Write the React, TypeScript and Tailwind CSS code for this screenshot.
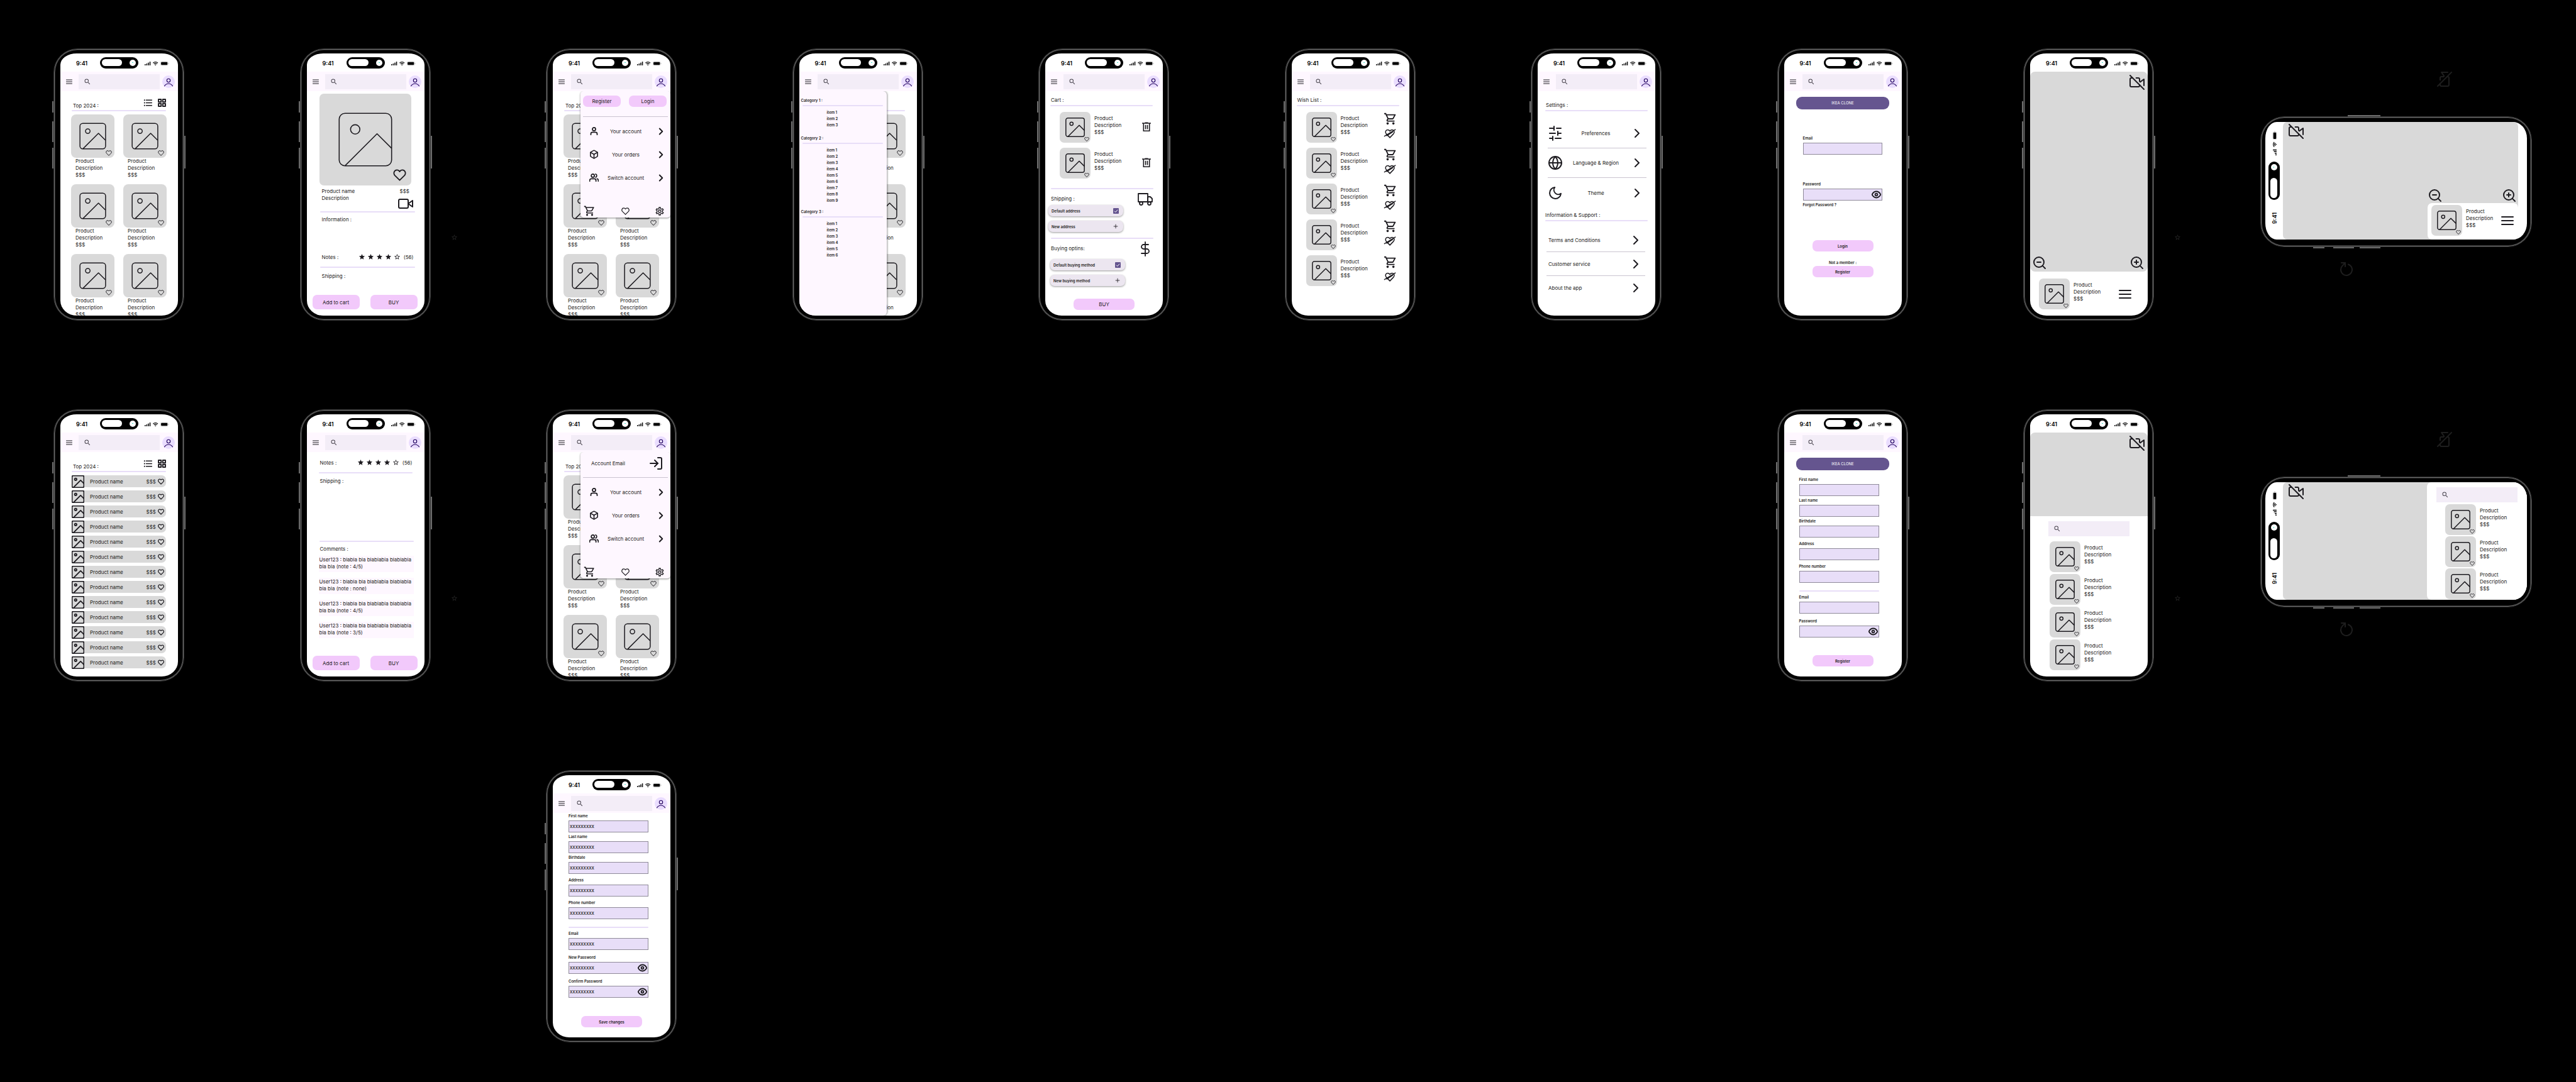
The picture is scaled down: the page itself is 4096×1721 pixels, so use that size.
import { useId, type ReactNode } from "react";
import {
  FiBox,
  FiChevronRight,
  FiDollarSign,
  FiEye,
  FiGlobe,
  FiLogIn,
  FiMenu,
  FiMoon,
  FiPlus,
  FiRotateCw,
  FiSliders,
  FiTruck,
  FiUser,
  FiUsers,
  FiVideo,
  FiVideoOff,
  FiZoomIn,
  FiZoomOut,
} from "react-icons/fi";
import {
  MdFormatListBulleted,
  MdOutlineSettings,
  MdOutlineShoppingCart,
  MdSearch,
  MdStar,
  MdStarBorder,
} from "react-icons/md";

/* ---------- drawings ---------- */

function ImageGlyph({ className, stroke = 1.5 }: { className: string; stroke?: number }) {
  return (
    <svg viewBox="2.5 2.5 19 19" className={className} fill="none" stroke="#1d1b20" strokeWidth={stroke} aria-hidden="true">
      <rect x="3" y="3" width="18" height="18" rx="2" vectorEffect="non-scaling-stroke" />
      <circle cx="8.5" cy="8.5" r="1.6" vectorEffect="non-scaling-stroke" />
      <path d="M21 15 16 10 5 21" strokeLinejoin="round" vectorEffect="non-scaling-stroke" />
    </svg>
  );
}

function Heart({ className, stroke = 1 }: { className: string; stroke?: number }) {
  return (
    <svg viewBox="0 0 24 22" className={className} fill="none" stroke="#1d1b20" strokeWidth={stroke} strokeLinejoin="round" aria-hidden="true">
      <path
        d="M12 20.5 3.2 11.8C-.2 8.2 1.6 1.6 7 1.6c2.4 0 4 1.200 5 3 1-1.800 2.600-3 5-3 5.400 0 7.200 6.600 3.800 10.200Z"
        vectorEffect="non-scaling-stroke"
      />
    </svg>
  );
}

function HeartOff() {
  return (
    <svg viewBox="0 0 26 20" className="h-[15px] w-[20px]" fill="none" stroke="#1d1b20" strokeWidth="2" strokeLinejoin="round" strokeLinecap="round" aria-hidden="true">
      <path d="M13 18.500 5.300 10.500C2.300 7 4 2 8.300 2c2.200 0 3.700 1.200 4.700 2.800C14 3.200 15.500 2 17.700 2 22 2 23.700 7 20.700 10.500Z" />
      <path d="M1.500 15.500 24.500 1.500M6.500 14.500 19 6.500" />
    </svg>
  );
}

function Trash() {
  return (
    <svg viewBox="0 0 14 15" className="h-[15px] w-[14px]" fill="none" stroke="#1d1b20" strokeWidth="1.600" aria-hidden="true">
      <path d="M0 2h14M4.500 1.200h5M2.300 2v12.200h9.400V2M5.500 4.800v6.800M8.500 4.800v6.800" />
    </svg>
  );
}

function GridGlyph() {
  return (
    <svg viewBox="0 0 13 13" className="size-[13px]" fill="none" stroke="#1d1b20" strokeWidth="1.900" strokeLinejoin="round" aria-hidden="true">
      <rect x="1" y="1" width="4.200" height="4.200" />
      <rect x="7.800" y="1" width="4.200" height="4.200" />
      <rect x="1" y="7.800" width="4.200" height="4.200" />
      <rect x="7.800" y="7.800" width="4.200" height="4.200" />
    </svg>
  );
}

function Signals() {
  return (
    <svg viewBox="0 0 39 8" className="h-[8px] w-[39px]" aria-hidden="true">
      <rect x="0" y="5" width="1.500" height="2" rx=".5" />
      <rect x="2.600" y="4" width="1.500" height="3" rx=".5" />
      <rect x="5.200" y="2.500" width="1.500" height="4.500" rx=".5" />
      <rect x="7.800" y="1" width="1.500" height="6" rx=".5" />
      <path d="M13.400 3.200a5.500 5.500 0 0 1 7.600 0M14.900 4.900a3.400 3.400 0 0 1 4.600 0" fill="none" stroke="#000" strokeWidth="1.200" />
      <path d="m17.200 7.200-1.200-1.300a2 2 0 0 1 2.400 0Z" />
      <rect x="25.300" y="1" width="11.800" height="6" rx="1.800" fill="none" stroke="#bbb" strokeWidth=".6" />
      <rect x="26.100" y="1.700" width="10.200" height="4.600" rx="1.200" />
      <rect x="37.600" y="3" width=".8" height="2" fill="#bbb" />
    </svg>
  );
}

/* ---------- shared parts ---------- */

function StatusBar() {
  return (
    <div className="flex h-[29px] w-[187px] shrink-0 items-center pl-[25px] text-black">
      <span className="mt-[2px] w-[38px] text-[9px] leading-[10px] font-semibold">9:41</span>
      <span className="flex h-[18px] w-[61px] items-center justify-between rounded-full bg-black pr-[4px] pl-[3px]">
        <span className="h-[11px] w-[32px] rounded-full bg-white" />
        <span className="flex size-[10px] items-center justify-center rounded-full bg-white">
          <span className="h-px w-[2px] bg-[#3fe8d0]" />
        </span>
      </span>
      <span className="mt-[2px] ml-[10px]">
        <Signals />
      </span>
    </div>
  );
}

function SearchBox() {
  return (
    <label className="flex h-[24px] w-[129px] shrink-0 items-center bg-[#f3edf7] pl-[8px]">
      <MdSearch className="size-[12px] shrink-0 text-[#49454f]" aria-hidden="true" />
      <input type="search" aria-label="Search" className="min-w-0 flex-1 bg-transparent px-[4px] text-[8px] outline-none" />
    </label>
  );
}

function AppHeader() {
  return (
    <header className="flex h-[31px] shrink-0 items-center bg-[#fef7ff] pl-[8px]">
      <button type="button" aria-label="Open categories" className="mr-[9px]">
        <FiMenu className="size-[12px]" />
      </button>
      <SearchBox />
      <button type="button" aria-label="Account" className="ml-[4px] size-[20px] rounded-full bg-[#eaddff]">
        <svg viewBox="0 0 20 20" className="size-[20px]" fill="none" stroke="#21005d" strokeWidth="1.100" aria-hidden="true">
          <circle cx="10" cy="8" r="2.700" />
          <path d="M3.200 17.300C5 14.300 7.400 13 10 13s5 1.300 6.800 4.300" />
        </svg>
      </button>
    </header>
  );
}

function Phone({ place = "", header = true, star = false, children }: { place?: string; header?: boolean; star?: boolean; children: ReactNode }) {
  return (
    <article className={`relative h-[433px] w-[208px] ${place}`}>
      <i className="absolute top-[84px] -left-[2px] h-[18px] w-[2px] bg-[#6d6d6d]" />
      <i className="absolute top-[116px] -left-[2px] h-[33px] w-[2px] bg-[#6d6d6d]" />
      <i className="absolute top-[158px] -left-[2px] h-[33px] w-[2px] bg-[#6d6d6d]" />
      <i className="absolute top-[139px] -right-[2px] h-[52px] w-[2px] bg-[#6d6d6d]" />
      {star && <MdStarBorder className="absolute top-[295px] left-[240px] size-[11px] text-[#242424]" aria-hidden="true" />}
      <div className="h-full rounded-[38px] border border-[#2e2e2e] bg-black py-[7px] pr-[9px] pl-[10px] shadow-[inset_0_0_0_1px_#6a6a6a,inset_0_0_0_2px_#2c2c2c]">
        <div className="flex h-full flex-col overflow-hidden bg-white [border-radius:26px_26px_26px_26px/18px_18px_24px_24px]">
          <StatusBar />
          {header && <AppHeader />}
          <div className="relative flex min-h-0 flex-1 flex-col overflow-hidden">{children}</div>
        </div>
      </div>
    </article>
  );
}

function LandscapePhone({ children }: { children: ReactNode }) {
  return (
    <article className="relative h-[208px] w-[432px]">
      <i className="absolute -top-[2px] left-[139px] h-[2px] w-[52px] bg-[#6d6d6d]" />
      <i className="absolute -bottom-[2px] left-[84px] h-[2px] w-[18px] bg-[#6d6d6d]" />
      <i className="absolute -bottom-[2px] left-[116px] h-[2px] w-[33px] bg-[#6d6d6d]" />
      <i className="absolute -bottom-[2px] left-[158px] h-[2px] w-[33px] bg-[#6d6d6d]" />
      <FiVideoOff className="absolute -top-[71px] left-[281px] size-[24px] -rotate-90 text-[#1e1e1e]" aria-hidden="true" />
      <FiRotateCw className="absolute top-[232px] left-[125px] size-[24px] -rotate-90 text-[#1e1e1e]" aria-hidden="true" />
      <div className="h-full rounded-[38px] border border-[#2e2e2e] bg-black pt-[8px] pr-[7px] pb-[11px] pl-[7px] shadow-[inset_0_0_0_1px_#6a6a6a,inset_0_0_0_2px_#2c2c2c]">
        <div className="flex h-full overflow-hidden bg-white [border-radius:18px_22px_22px_18px/26px]">
          <div className="relative w-[28px] shrink-0">
            <div className="absolute bottom-0 left-full origin-bottom-left -rotate-90">
              <StatusBar />
            </div>
          </div>
          {children}
        </div>
      </div>
    </article>
  );
}

function Divider({ className = "" }: { className?: string }) {
  return <hr className={`h-[2px] shrink-0 rounded-full border-0 bg-[#e8def8] ${className}`} />;
}

function PinkButton({ className, children }: { className: string; children: ReactNode }) {
  return (
    <button type="button" className={`shrink-0 rounded-[7px] bg-[#f2c9fb] text-center ${className}`}>
      {children}
    </button>
  );
}

function Details() {
  return (
    <p className="leading-[11px]">
      Product
      <br />
      Description
      <br />
      $$$
    </p>
  );
}

/* ---------- catalogue ---------- */

function CatalogueHeading({ icons = true }: { icons?: boolean }) {
  return (
    <div className="mr-[19px] ml-[18px] shrink-0 pt-[12px]">
      <div className="flex h-[18px] justify-between">
        <h2 className="mt-[6px] ml-[2px] leading-[11px]">Top 2024 :</h2>
        {icons && (
          <div className="flex h-[13px] items-center gap-[7px]">
            <button type="button" aria-label="List view">
              <MdFormatListBulleted className="size-[17px]" />
            </button>
            <button type="button" aria-label="Grid view">
              <GridGlyph />
            </button>
          </div>
        )}
      </div>
      <Divider />
    </div>
  );
}

function ProductCard() {
  return (
    <div>
      <div className="relative size-[69px] rounded-[8px] bg-[#d9d9d9] p-[13px]">
        <ImageGlyph className="size-[43px]" />
        <button type="button" aria-label="Add to wish list" className="absolute right-[4px] bottom-[3px]">
          <Heart className="h-[9px] w-[10px]" />
        </button>
      </div>
      <div className="pl-[7px]">
        <Details />
      </div>
    </div>
  );
}

function Catalogue({ icons = true }: { icons?: boolean }) {
  return (
    <>
      <CatalogueHeading icons={icons} />
      <div className="mt-[5px] grid grid-cols-[69px_69px] justify-between gap-y-[9px] pr-[18px] pl-[17px]">
        {Array.from({ length: 6 }, (_, i) => (
          <ProductCard key={i} />
        ))}
      </div>
    </>
  );
}

function CatalogueList() {
  return (
    <>
      <CatalogueHeading />
      <ul className="mt-[5px] flex flex-col gap-[5px] pr-[19px] pl-[18px]">
        {Array.from({ length: 13 }, (_, i) => (
          <li key={i} className="flex h-[19px] items-center rounded-[7px] bg-[#d9d9d9] pr-[3px]">
            <ImageGlyph className="size-[20px]" stroke={1.8} />
            <span className="ml-[9px] flex-1">Product name</span>
            <span className="mr-[3px]">$$$</span>
            <button type="button" aria-label="Add to wish list">
              <Heart className="h-[10px] w-[10px]" stroke={1.2} />
            </button>
          </li>
        ))}
      </ul>
    </>
  );
}

/* ---------- product page ---------- */

function NotesRow() {
  return (
    <div className="flex h-[11px] shrink-0 items-center justify-between">
      <span>Notes :</span>
      <span className="flex items-center gap-[3px]">
        <MdStar className="size-[11px]" />
        <MdStar className="size-[11px]" />
        <MdStar className="size-[11px]" />
        <MdStar className="size-[11px]" />
        <MdStarBorder className="size-[11px]" />
        <span className="ml-[2px]">(56)</span>
      </span>
    </div>
  );
}

function BuyBar({ className }: { className: string }) {
  return (
    <div className={`flex shrink-0 justify-between pr-[11px] pl-[9px] ${className}`}>
      <PinkButton className="h-[23px] w-[75px]">Add to cart</PinkButton>
      <PinkButton className="h-[23px] w-[75px]">BUY</PinkButton>
    </div>
  );
}

function ProductPage() {
  return (
    <>
      <div className="relative mt-[4px] ml-[20px] size-[146px] shrink-0 rounded-[7px] bg-[#d9d9d9] p-[29px]">
        <ImageGlyph className="size-[88px]" stroke={1.6} />
        <button type="button" aria-label="Add to wish list" className="absolute right-[8px] bottom-[7px]">
          <Heart className="h-[19px] w-[21px]" stroke={1.8} />
        </button>
      </div>
      <div className="mt-[4px] mr-[18px] ml-[24px] flex h-[37px] shrink-0 justify-between">
        <p className="leading-[11px]">
          Product name
          <br />
          Description
        </p>
        <div className="leading-[11px]">
          <p className="pl-[3px]">$$$</p>
          <button type="button" aria-label="View in camera" className="mt-[2px] block">
            <FiVideo className="size-[24px]" />
          </button>
        </div>
      </div>
      <Divider className="mr-[15px] ml-[21px]" />
      <h3 className="mt-[6px] ml-[24px] leading-[11px]">Information :</h3>
      <div className="mt-[48px] mr-[17px] ml-[24px]">
        <NotesRow />
      </div>
      <Divider className="mt-[10px] mr-[15px] ml-[21px]" />
      <h3 className="mt-[8px] ml-[24px] leading-[11px]">Shipping :</h3>
      <BuyBar className="mt-[24px]" />
    </>
  );
}

function ReviewsPage() {
  return (
    <>
      <div className="mt-[11px] mr-[19px] ml-[21px]">
        <NotesRow />
      </div>
      <Divider className="mt-[10px] mr-[19px] ml-[19px]" />
      <h3 className="mt-[7px] ml-[21px] leading-[11px]">Shipping :</h3>
      <Divider className="mt-[89px] mr-[17px] ml-[20px]" />
      <h3 className="mt-[6px] ml-[21px] leading-[11px]">Comments :</h3>
      <ul className="mt-[5px] mr-[17px] ml-[19px] flex flex-col gap-[9px]">
        {["4/5", "none", "4/5", "3/5"].map((note, i) => (
          <li key={i} className="h-[26px] bg-[#fef7ff] pt-px pl-px leading-[11px] whitespace-nowrap">
            User123 : blabla bla blablabla blablabla
            <br />
            bla bla (note : {note})
          </li>
        ))}
      </ul>
      <BuyBar className="mt-[28px]" />
    </>
  );
}

/* ---------- menus ---------- */

function MenuItem({ icon, children }: { icon: ReactNode; children: ReactNode }) {
  return (
    <button type="button" className="grid h-[37px] w-full grid-cols-[29px_1fr_28px] items-center">
      <span className="flex justify-end">{icon}</span>
      <span className="text-center">{children}</span>
      <FiChevronRight className="ml-[4px] size-[18px]" strokeWidth={2.6} />
    </button>
  );
}

function AccountMenu({ children }: { children: ReactNode }) {
  return (
    <nav className="absolute top-0 right-0 z-10 flex h-[201px] w-[143px] flex-col rounded-[5px] bg-[#fef7ff] shadow-[0_1px_3px_rgba(0,0,0,0.45)]">
      <div className="mx-[4px] h-[41px] border-b border-[#cac4d0]">{children}</div>
      <div className="mt-[4px]">
        <MenuItem icon={<FiUser className="size-[15px]" strokeWidth={2.8} />}>Your account</MenuItem>
        <MenuItem icon={<FiBox className="size-[15px]" strokeWidth={2.6} />}>Your orders</MenuItem>
        <MenuItem icon={<FiUsers className="size-[15px]" strokeWidth={2.8} />}>Switch account</MenuItem>
      </div>
      <div className="mt-auto mb-px flex items-center justify-between pr-[9px] pl-[5px]">
        <button type="button" aria-label="Cart">
          <MdOutlineShoppingCart className="size-[19px]" />
        </button>
        <button type="button" aria-label="Wish list">
          <Heart className="h-[12px] w-[13px]" stroke={1.2} />
        </button>
        <button type="button" aria-label="Settings">
          <MdOutlineSettings className="size-[16px]" />
        </button>
      </div>
    </nav>
  );
}

function GuestMenu() {
  return (
    <AccountMenu>
      <div className="flex justify-between pt-[7px] pr-[2px]">
        <PinkButton className="h-[18px] w-[60px]">Register</PinkButton>
        <PinkButton className="h-[18px] w-[60px]">Login</PinkButton>
      </div>
    </AccountMenu>
  );
}

function MemberMenu() {
  return (
    <AccountMenu>
      <div className="flex items-center justify-between pt-[6px] pr-[7px] pl-[13px]">
        <span>Account Email</span>
        <button type="button" aria-label="Sign out">
          <FiLogIn className="size-[24px]" />
        </button>
      </div>
    </AccountMenu>
  );
}

function Category({ title, count, className }: { title: string; count: number; className: string }) {
  return (
    <section className={className}>
      <h3 className="ml-[3px] leading-[10px]">{title}</h3>
      <Divider className="mt-[2px] mr-[6px] ml-[5px]" />
      <ul className="mt-[5px] ml-[44px]">
        {Array.from({ length: count }, (_, i) => (
          <li key={i}>item {i + 1}</li>
        ))}
      </ul>
    </section>
  );
}

function Categories() {
  return (
    <nav className="absolute inset-y-0 left-0 z-10 w-[139px] rounded-r-[6px] bg-[#fef7ff] pt-[10px] text-[6px] leading-[10px] font-semibold shadow-[1px_0_3px_rgba(0,0,0,0.4)]">
      <Category title="Category 1 :" count={3} className="" />
      <Category title="Category 2 :" count={9} className="mt-[11px]" />
      <Category title="Category 3 :" count={6} className="mt-[8px]" />
    </nav>
  );
}

/* ---------- cart and wish list ---------- */

function ProductLine({ children, className = "" }: { children?: ReactNode; className?: string }) {
  return (
    <div className={`flex shrink-0 ${className}`}>
      <div className="relative size-[49px] shrink-0 rounded-[7px] bg-[#d9d9d9] p-[9px]">
        <ImageGlyph className="size-[31px]" />
        <button type="button" aria-label="Add to wish list" className="absolute right-[2px] bottom-[2px]">
          <Heart className="h-[7px] w-[8px]" stroke={0.9} />
        </button>
      </div>
      <div className="mt-[5px] ml-[6px] flex-1">
        <Details />
      </div>
      {children}
    </div>
  );
}

function Chip({ label, checked }: { label: string; checked?: boolean }) {
  const style =
    "flex h-[18px] w-[119px] items-center justify-between rounded-[7px] bg-[#ece6f0] pr-[7px] pl-[5px] text-[6px] font-semibold shadow-[0_1px_3px_rgba(0,0,0,0.4)]";
  if (!checked) {
    return (
      <button type="button" className={style}>
        {label}
        <FiPlus className="size-[10px]" />
      </button>
    );
  }
  return (
    <label className={style}>
      {label}
      <span className="relative size-[9px]">
        <input type="checkbox" defaultChecked className="block size-[9px] appearance-none rounded-[1px] bg-[#65558f]" />
        <svg viewBox="0 0 9 9" className="pointer-events-none absolute inset-0 size-[9px]" fill="none" stroke="#fff" aria-hidden="true">
          <path d="m2 4.700 1.700 1.700L7.200 2.700" />
        </svg>
      </span>
    </label>
  );
}

function CartSection({ title, icon, inset, gap, children }: { title: string; icon: ReactNode; inset: string; gap: string; children: ReactNode }) {
  return (
    <section className="flex shrink-0 justify-between pr-[16px]">
      <div className="pt-[10px]">
        <h3 className="ml-[9px] leading-[11px]">{title}</h3>
        <div className={`flex flex-col gap-[7px] ${inset} ${gap}`}>{children}</div>
      </div>
      <span className="mt-[4px]">{icon}</span>
    </section>
  );
}

function Cart() {
  return (
    <>
      <h2 className="mt-[9px] ml-[9px] leading-[11px]">Cart :</h2>
      <Divider className="mt-[2px] mr-[16px] ml-[8px]" />
      <div className="mt-[9px] mr-[19px] ml-[23px] flex flex-col gap-[8px]">
        {[0, 1].map((i) => (
          <ProductLine key={i}>
            <button type="button" aria-label="Remove" className="mb-[3px]">
              <Trash />
            </button>
          </ProductLine>
        ))}
      </div>
      <Divider className="mt-[15px] mr-[15px] ml-[9px]" />
      <CartSection title="Shipping :" inset="ml-[5px]" gap="mt-[4px]" icon={<FiTruck className="size-[24px]" strokeWidth={1.8} />}>
        <Chip label="Default address" checked />
        <Chip label="New address" />
      </CartSection>
      <Divider className="mt-[9px] mr-[15px] ml-[9px]" />
      <CartSection title="Buying optins:" inset="ml-[8px]" gap="mt-[11px]" icon={<FiDollarSign className="size-[24px]" strokeWidth={1.8} />}>
        <Chip label="Default buying method" checked />
        <Chip label="New buying method" />
      </CartSection>
      <PinkButton className="mx-auto mt-[20px] h-[18px] w-[97px]">BUY</PinkButton>
    </>
  );
}

function WishList() {
  return (
    <>
      <h2 className="mt-[9px] ml-[9px] leading-[11px]">Wish List :</h2>
      <Divider className="mt-[2px] mr-[16px] ml-[8px]" />
      <div className="mt-[9px] mr-[19px] ml-[23px] flex flex-col gap-[8px]">
        {[0, 1, 2, 3, 4].map((i) => (
          <ProductLine key={i}>
            <div className="flex flex-col gap-[5px]">
              <button type="button" aria-label="Add to cart">
                <MdOutlineShoppingCart className="size-[22px]" />
              </button>
              <button type="button" aria-label="Remove from wish list">
                <HeartOff />
              </button>
            </div>
          </ProductLine>
        ))}
      </div>
    </>
  );
}

/* ---------- settings ---------- */

function SettingRow({ icon, children, last }: { icon: ReactNode; children: ReactNode; last?: boolean }) {
  const line = last ? "" : "border-b border-[#cac4d0]";
  return (
    <button type="button" className={`grid h-[47px] shrink-0 grid-cols-[26px_1fr_30px] items-center ${line}`}>
      {icon}
      <span>{children}</span>
      <FiChevronRight className="mx-auto size-[24px]" />
    </button>
  );
}

function SupportRow({ children, last }: { children: ReactNode; last?: boolean }) {
  const line = last ? "" : "border-b border-[#cac4d0]";
  return (
    <a href="#support" className={`flex h-[38px] items-center justify-between pr-[3px] pl-[3px] ${line}`}>
      {children}
      <FiChevronRight className="size-[24px]" />
    </a>
  );
}

function Settings() {
  return (
    <>
      <h2 className="mt-[17px] ml-[13px] leading-[11px]">Settings :</h2>
      <Divider className="mt-[2px] mr-[12px] ml-[12px]" />
      <div className="mt-[12px] mr-[14px] ml-[16px] flex flex-col">
        <SettingRow icon={<FiSliders className="size-[24px] rotate-90" />}>Preferences</SettingRow>
        <SettingRow icon={<FiGlobe className="size-[24px]" />}>Language &amp; Region</SettingRow>
        <SettingRow icon={<FiMoon className="size-[24px]" />} last>
          Theme
        </SettingRow>
      </div>
      <h2 className="mt-[7px] ml-[12px] leading-[11px]">Information &amp; Support :</h2>
      <Divider className="mt-[2px] mr-[12px] ml-[12px]" />
      <div className="mt-[11px] mr-[16px] ml-[14px] flex flex-col">
        <SupportRow>Terms and Conditions</SupportRow>
        <SupportRow>Customer service</SupportRow>
        <SupportRow last>About the app</SupportRow>
      </div>
    </>
  );
}

/* ---------- forms ---------- */

function Field({ label, value = "", secret, className = "" }: { label: string; value?: string; secret?: boolean; className?: string }) {
  const id = useId();
  return (
    <div className={`shrink-0 text-[6px] font-semibold ${className}`}>
      <label htmlFor={id} className="block leading-[8px]">
        {label}
      </label>
      <div className="relative mt-[3px]">
        <input id={id} defaultValue={value} className="block h-[19px] w-full border border-[#8f8a99] bg-[#e8def8] px-px outline-none" />
        {secret && (
          <button type="button" aria-label={`Show ${label}`} className="absolute top-[2px] right-[2px]">
            <FiEye className="size-[15px]" strokeWidth={3} />
          </button>
        )}
      </div>
    </div>
  );
}

function Brand() {
  return <h1 className="mx-auto mt-[9px] h-[20px] w-[148px] shrink-0 rounded-[9px] bg-[#65558f] text-center text-[6px] leading-[20px] text-white">IKEA CLONE</h1>;
}

function Login() {
  return (
    <>
      <Brand />
      <form className="mt-[42px] mr-[31px] ml-[30px] flex flex-col">
        <Field label="Email" />
        <Field label="Password" secret className="mt-[43px]" />
        <a href="#forgot" className="mt-[3px] text-[6px] leading-[8px] font-semibold">
          Forgot Password ?
        </a>
      </form>
      <PinkButton className="mx-auto mt-[52px] h-[18px] w-[97px] text-[6px] font-semibold">Login</PinkButton>
      <p className="mt-[14px] text-center text-[6px] leading-[8px] font-semibold">Not a member :</p>
      <PinkButton className="mx-auto mt-px h-[18px] w-[97px] text-[6px] font-semibold">Register</PinkButton>
    </>
  );
}

function PersonFields({ value }: { value?: string }) {
  return (
    <>
      <Field label="First name" value={value} />
      <Field label="Last name" value={value} className="mt-[3px]" />
      <Field label="Birthdate" value={value} className="mt-[3px]" />
      <Field label="Address" value={value} className="mt-[6px]" />
      <Field label="Phone number" value={value} className="mt-[6px]" />
      <Divider className="mt-[12px]" />
      <Field label="Email" value={value} className="mt-[5px]" />
    </>
  );
}

function Register() {
  return (
    <>
      <Brand />
      <form className="mt-[11px] mr-[36px] ml-[24px] flex flex-col">
        <PersonFields />
        <Field label="Password" secret className="mt-[8px]" />
      </form>
      <PinkButton className="mx-auto mt-[28px] h-[18px] w-[97px] text-[6px] font-semibold">Register</PinkButton>
    </>
  );
}

function EditAccount() {
  const hidden = "XXXXXXXXX";
  return (
    <>
      <form className="mt-px mr-[35px] ml-[25px] flex flex-col">
        <PersonFields value={hidden} />
        <Field label="New Password" value={hidden} secret className="mt-[8px]" />
        <Field label="Confirm Password" value={hidden} secret className="mt-[8px]" />
      </form>
      <PinkButton className="mx-auto mt-[29px] h-[18px] w-[97px] text-[6px] font-semibold">Save changes</PinkButton>
    </>
  );
}

/* ---------- camera views ---------- */

function CameraOff() {
  return (
    <button type="button" aria-label="Stop camera">
      <FiVideoOff className="size-[24px]" />
    </button>
  );
}

function ZoomButtons() {
  return (
    <>
      <button type="button" aria-label="Zoom out">
        <FiZoomOut className="size-[24px]" />
      </button>
      <button type="button" aria-label="Zoom in">
        <FiZoomIn className="size-[24px]" />
      </button>
    </>
  );
}

function MoreButton() {
  return (
    <button type="button" aria-label="More products">
      <FiMenu className="size-[24px]" />
    </button>
  );
}

function Camera() {
  return (
    <>
      <div className="flex h-[318px] shrink-0 flex-col justify-between rounded-[8px] bg-[#d9d9d9] pt-[5px] pr-[5px] pb-[2px] pl-[3px]">
        <div className="flex justify-end">
          <CameraOff />
        </div>
        <div className="flex justify-between">
          <ZoomButtons />
        </div>
      </div>
      <ProductLine className="mt-[11px] mr-[24px] ml-[14px]">
        <MoreButton />
      </ProductLine>
    </>
  );
}

function CameraPicker() {
  return (
    <>
      <div className="flex h-[133px] shrink-0 justify-end rounded-t-[8px] bg-[#d9d9d9] pt-[5px] pr-[5px]">
        <div>
          <CameraOff />
        </div>
      </div>
      <div className="mt-[8px] ml-[29px]">
        <SearchBox />
      </div>
      <div className="mt-[8px] ml-[31px] flex flex-col gap-[3px]">
        {[0, 1, 2, 3].map((i) => (
          <ProductLine key={i} />
        ))}
      </div>
    </>
  );
}

function WideCamera() {
  return (
    <div className="mr-[14px] flex flex-1 flex-col rounded-[7px] bg-[#d9d9d9]">
      <div className="mt-[3px] ml-[9px] flex-1">
        <CameraOff />
      </div>
      <div className="ml-[230px] flex justify-between pr-[2px]">
        <ZoomButtons />
      </div>
      <div className="ml-[230px] h-[58px] rounded-[7px] bg-white pt-[3px]">
        <ProductLine className="mr-[5px] ml-[6px]">
          <MoreButton />
        </ProductLine>
      </div>
    </div>
  );
}

function WideCameraPicker() {
  return (
    <div className="flex flex-1 rounded-l-[7px] bg-[#d9d9d9]">
      <div className="flex-1 pt-[3px] pl-[9px]">
        <CameraOff />
      </div>
      <div className="w-[159px] rounded-l-[7px] bg-white pt-[8px]">
        <div className="ml-[15px]">
          <SearchBox />
        </div>
        <div className="mt-[3px] ml-[29px] flex flex-col gap-[2px]">
          {[0, 1, 2].map((i) => (
            <ProductLine key={i} />
          ))}
        </div>
      </div>
    </div>
  );
}

/* ---------- board ---------- */

export default function App() {
  return (
    <main className="flex min-h-screen items-start gap-[169px] bg-black pt-[77px] pr-[70px] pl-[85px] text-[8px] text-[#1d1b20] [font-family:Inter,sans-serif]">
      <div className="grid flex-1 grid-cols-[repeat(9,208px)] justify-between gap-y-[141px]">
        <Phone>
          <Catalogue />
        </Phone>
        <Phone star>
          <ProductPage />
        </Phone>
        <Phone>
          <Catalogue />
          <GuestMenu />
        </Phone>
        <Phone>
          <Catalogue icons={false} />
          <Categories />
        </Phone>
        <Phone>
          <Cart />
        </Phone>
        <Phone>
          <WishList />
        </Phone>
        <Phone>
          <Settings />
        </Phone>
        <Phone>
          <Login />
        </Phone>
        <Phone header={false} star>
          <Camera />
        </Phone>
        <Phone>
          <CatalogueList />
        </Phone>
        <Phone star>
          <ReviewsPage />
        </Phone>
        <Phone>
          <Catalogue />
          <MemberMenu />
        </Phone>
        <Phone place="col-start-8">
          <Register />
        </Phone>
        <Phone header={false} star>
          <CameraPicker />
        </Phone>
        <Phone place="col-start-3">
          <EditAccount />
        </Phone>
      </div>
      <div className="mt-[108px] flex flex-col gap-[365px]">
        <LandscapePhone>
          <WideCamera />
        </LandscapePhone>
        <LandscapePhone>
          <WideCameraPicker />
        </LandscapePhone>
      </div>
    </main>
  );
}
